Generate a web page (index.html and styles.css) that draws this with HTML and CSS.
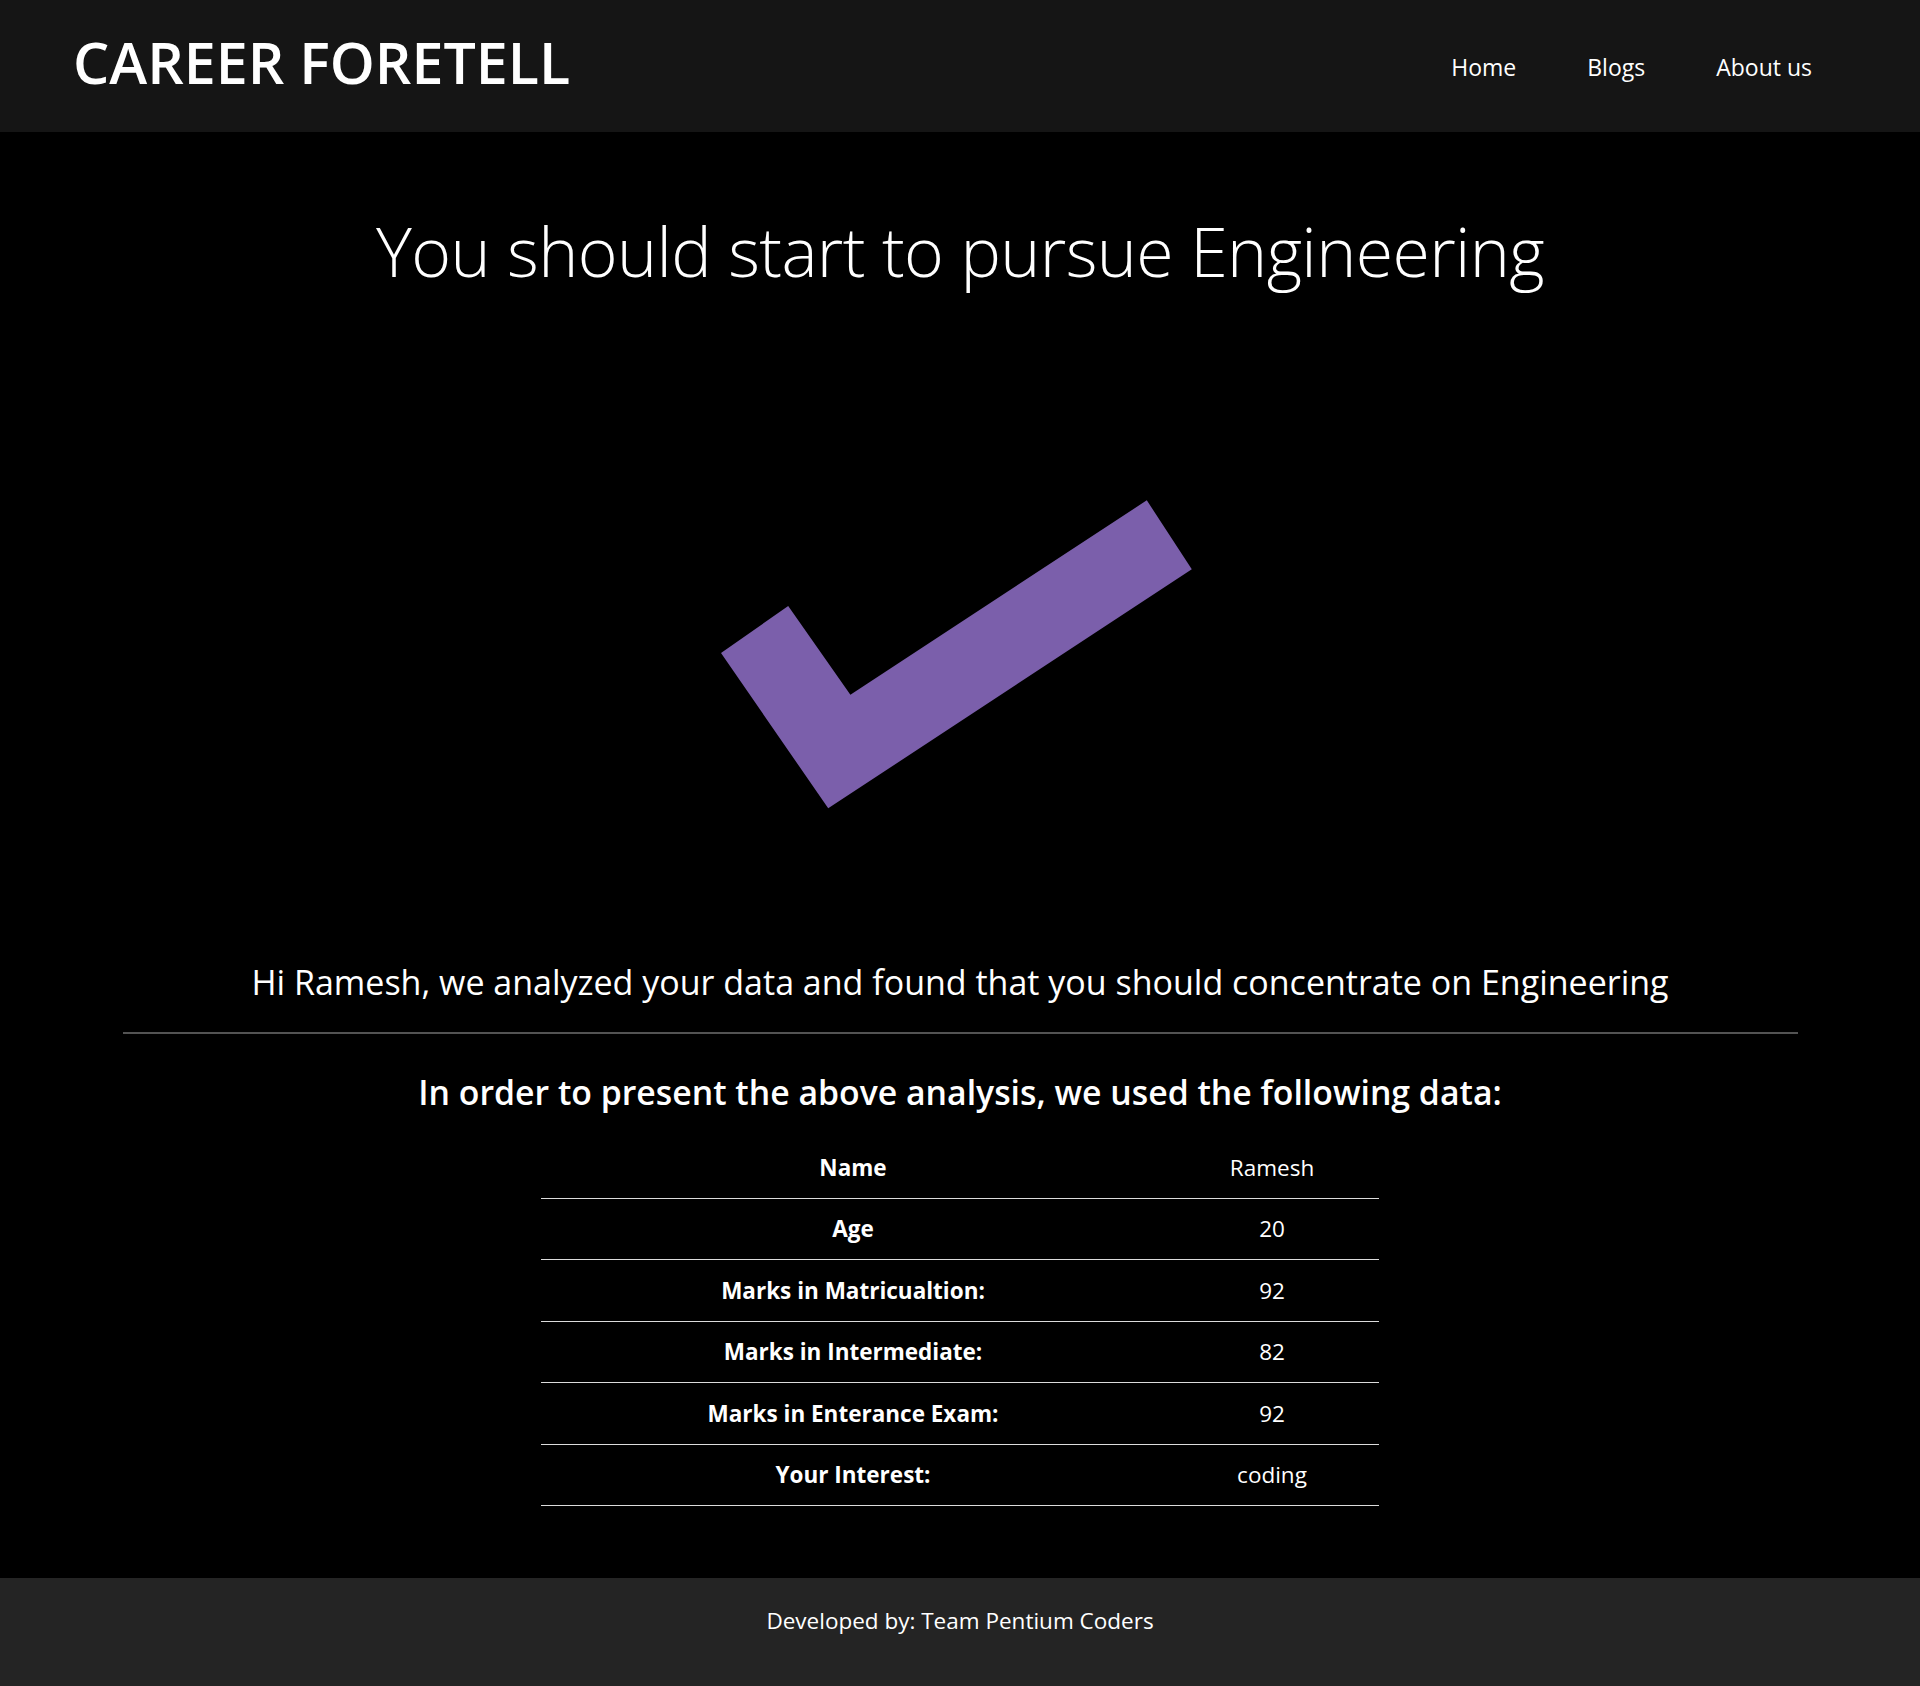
FILE: index.html
```html
<!DOCTYPE html>
<html lang="en">
<head>
<meta charset="utf-8">
<title>Career Foretell</title>
<link rel="stylesheet" href="styles.css">
</head>
<body>
<header class="topbar">
  <div class="brand">CAREER FORETELL</div>
  <nav class="nav">
    <a class="nav-link" href="#">Home</a>
    <a class="nav-link" href="#">Blogs</a>
    <a class="nav-link" href="#">About us</a>
  </nav>
</header>
<main class="main">
  <h1 class="result-title">You should start to pursue Engineering</h1>
  <svg class="check" viewBox="720 490 480 330" width="480" height="330" aria-hidden="true">
    <polygon points="1146.8,499.3 1191.8,568.3 828.2,807.3 721,652 788.2,605 850.4,693.7" fill="#7b5fab"/>
  </svg>
  <p class="lead-text">Hi Ramesh, we analyzed your data and found that you should concentrate on Engineering</p>
  <hr class="divider">
  <h2 class="data-title">In order to present the above analysis, we used the following data:</h2>
  <table class="data-table">
    <colgroup><col class="col-label"><col class="col-value"></colgroup>
    <tbody>
      <tr><th>Name</th><td>Ramesh</td></tr>
      <tr><th>Age</th><td>20</td></tr>
      <tr><th>Marks in Matricualtion:</th><td>92</td></tr>
      <tr><th>Marks in Intermediate:</th><td>82</td></tr>
      <tr><th>Marks in Enterance Exam:</th><td>92</td></tr>
      <tr><th>Your Interest:</th><td>coding</td></tr>
    </tbody>
  </table>
</main>
<footer class="footer">Developed by: Team Pentium Coders</footer>
</body>
</html>
```
FILE: styles.css
```css
* { box-sizing: border-box; }
html, body { margin: 0; padding: 0; }
body {
  background: #000;
  color: #fff;
  font-family: "Open Sans", "Noto Sans", sans-serif;
}
.topbar {
  height: 132px;
  background: #151515;
  display: flex;
  justify-content: space-between;
  align-items: flex-start;
  padding: 0 108px 0 73px;
}
.brand {
  font-size: 57.3px;
  font-weight: 600;
  line-height: 1;
  margin-top: 34px;
}
.nav {
  display: flex;
  gap: 71px;
  margin-top: 56px;
}
.nav-link {
  color: #fff;
  text-decoration: none;
  font-size: 23px;
  line-height: 1;
}
.main {
  display: flex;
  flex-direction: column;
  align-items: center;
  padding-bottom: 72px;
}
.result-title {
  margin: 78px 0 0;
  font-size: 68px;
  font-weight: 300;
  line-height: 1.2;
  letter-spacing: -0.6px;
  text-align: center;
}
.check {
  display: block;
  margin-top: 199px;
}
.lead-text {
  margin: 141px 0 0;
  font-size: 34px;
  font-weight: 400;
  line-height: 1.2;
  text-align: center;
}
.divider {
  width: 1675px;
  margin: 30px 0 0;
  border: 0;
  border-top: 2px solid #535353;
  height: 0;
}
.data-title {
  margin: 37.5px 0 0;
  font-size: 33.8px;
  font-weight: 600;
  line-height: 1.2;
  text-align: center;
}
.data-table {
  margin-top: 25px;
  width: 838px;
  table-layout: fixed;
  border-collapse: collapse;
  font-size: 22.5px;
  line-height: 1.5;
}
.col-label { width: 624px; }
.col-value { width: 214px; }
.data-table th,
.data-table td {
  padding: 13.35px 8px;
  text-align: center;
  border-bottom: 1px solid #dcdcdc;
  color: #fff;
}
.data-table th { font-weight: 700; }
.data-table td { font-weight: 400; }
.footer {
  height: 108px;
  background: #242424;
  text-align: center;
  font-size: 22.5px;
  line-height: 1.5;
  padding-top: 26.4px;
}
```
